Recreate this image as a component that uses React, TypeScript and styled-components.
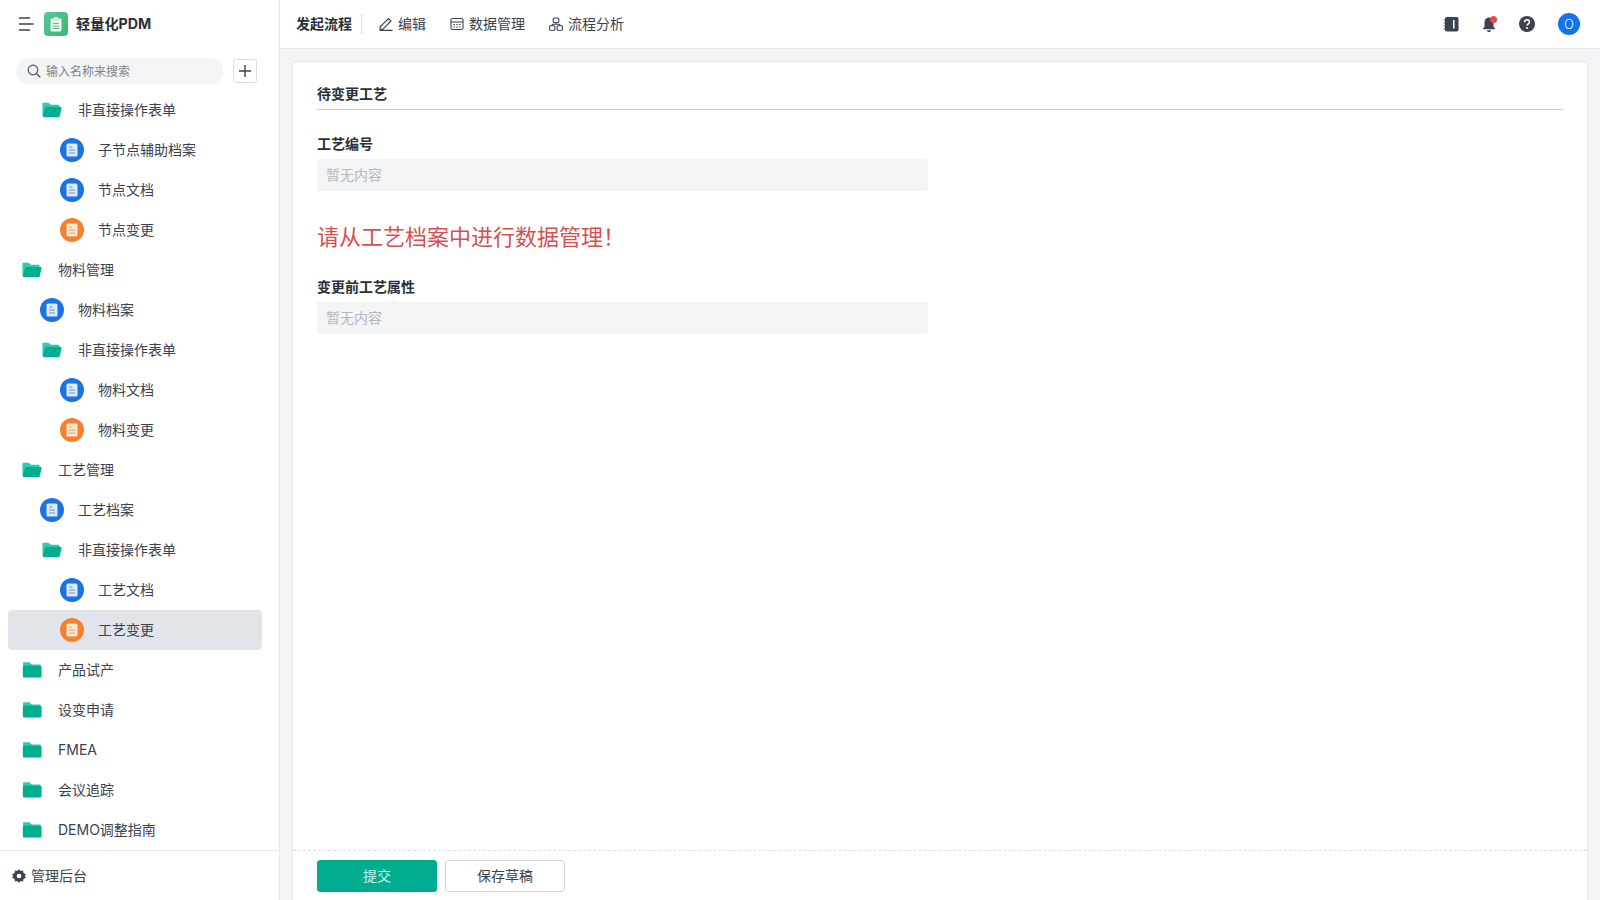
import React from "react";
import styled, { createGlobalStyle } from "styled-components";

const Global = createGlobalStyle`
  html, body { margin: 0; padding: 0; height: 100%; }
  body { font-family: Inter, "Noto Sans CJK SC", sans-serif; color: #1f2937; background: #f3f4f6; }
  * { box-sizing: border-box; }
`;

const Page = styled.div`
  display: flex;
  width: 1600px;
  height: 900px;
  overflow: hidden;
`;
const Sidebar = styled.aside`
  width: 280px;
  flex: none;
  display: flex;
  flex-direction: column;
  background: #fff;
  border-right: 1px solid #e5e7eb;
`;
const Brand = styled.div`
  height: 48px;
  flex: none;
  display: flex;
  align-items: center;
  padding-left: 18px;
`;
const Toggle = styled.span`
  display: flex;
  width: 16px;
  margin-right: 10px;
`;
const LogoTile = styled.span`
  width: 24px;
  height: 24px;
  border-radius: 4px;
  background: linear-gradient(135deg, #52c99a, #3fb56f);
  display: flex;
  align-items: center;
  justify-content: center;
  margin-right: 8px;
`;
const BrandName = styled.span`
  font-size: 14.2px;
  font-weight: 700;
  color: #2b2f36;
  padding-bottom: 2px;
`;
const SearchRow = styled.div`
  height: 42px;
  flex: none;
  display: flex;
  align-items: flex-start;
  padding: 10px 0 0 16px;
  gap: 10px;
`;
const SearchBox = styled.div`
  width: 207px;
  height: 26px;
  border-radius: 13px;
  background: #f3f4f6;
  display: flex;
  align-items: center;
  gap: 5px;
  padding-left: 11px;
  font-size: 12px;
  color: #7d838c;
`;
const SearchText = styled.span`
  padding-bottom: 2px;
`;
const AddButton = styled.span`
  width: 24px;
  height: 24px;
  border: 1px solid #d9dce1;
  border-radius: 3px;
  display: flex;
  align-items: center;
  justify-content: center;
  margin-top: 1px;
`;
const Tree = styled.div`
  flex: 1;
  min-height: 0;
  overflow: hidden;
  padding-right: 17px;
  padding-left: 8px;
`;
const Row = styled.div<{ $level: number; $active?: boolean }>`
  height: 40px;
  display: flex;
  align-items: center;
  gap: 16px;
  padding-left: ${(p) => 14 + p.$level * 20}px;
  border-radius: 4px;
  background: ${(p) => (p.$active ? "#e1e4e8" : "transparent")};
  font-size: 14px;
  color: #3b4250;
`;
const RowLabel = styled.span`
  padding-bottom: 2px;
`;
const IconBox = styled.span`
  width: 20px;
  flex: none;
  display: flex;
  justify-content: center;
`;
const DocCircle = styled.span<{ $color: string }>`
  width: 24px;
  height: 24px;
  flex: none;
  border-radius: 50%;
  background: ${(p) => p.$color};
  display: flex;
  align-items: center;
  justify-content: center;
`;
const SideFooter = styled.div`
  height: 50px;
  flex: none;
  border-top: 1px solid #e5e7eb;
  display: flex;
  align-items: center;
  gap: 5px;
  padding-left: 12px;
  font-size: 14px;
  color: #3b4250;
`;
const Main = styled.main`
  flex: 1;
  min-width: 0;
  display: flex;
  flex-direction: column;
`;
const TopBar = styled.header`
  height: 49px;
  flex: none;
  background: #fff;
  border-bottom: 1px solid #e5e7eb;
  display: flex;
  align-items: center;
  padding-left: 16px;
  padding-right: 20px;
  font-size: 14px;
`;
const FlowTitle = styled.span`
  font-weight: 600;
  color: #2b2f36;
  padding-right: 9px;
  border-right: 1px solid #d9dce1;
  line-height: 20px;
  margin-right: 17px;
`;
const TopAction = styled.span`
  display: flex;
  align-items: center;
  gap: 5px;
  margin-right: 24px;
  color: #3b4250;
`;
const ActionText = styled.span`
  padding-bottom: 2px;
`;
const TopRight = styled.div`
  margin-left: auto;
  display: flex;
  align-items: center;
  gap: 20px;
`;
const TopIcon = styled.span`
  position: relative;
  width: 18px;
  height: 18px;
  display: flex;
  align-items: center;
  justify-content: center;
`;
const RedDot = styled.span`
  position: absolute;
  top: 1px;
  right: 1px;
  width: 7px;
  height: 7px;
  border-radius: 50%;
  background: #e5484d;
`;
const Avatar = styled.span`
  width: 22px;
  height: 22px;
  border-radius: 50%;
  background: #1473e6;
  color: #e8f1fd;
  font-size: 13px;
  font-weight: 300;
  display: flex;
  align-items: center;
  justify-content: center;
  margin-left: 2px;
`;
const Content = styled.div`
  flex: 1;
  min-height: 0;
  padding: 12px 12px 0 12px;
  display: flex;
`;
const Card = styled.section`
  flex: 1;
  display: flex;
  flex-direction: column;
  background: #fff;
  border: 1px solid #e5e7eb;
  border-bottom: none;
  border-radius: 4px 4px 0 0;
`;
const Body = styled.div`
  flex: 1;
  padding: 22px 24px 0 24px;
`;
const SectionTitle = styled.h3`
  margin: 0 0 24px;
  height: 26px;
  font-size: 14px;
  line-height: 20px;
  font-weight: 600;
  color: #2b2f36;
  border-bottom: 1px solid #c9ccd1;
`;
const FieldLabel = styled.div`
  font-size: 14px;
  line-height: 20px;
  font-weight: 600;
  color: #2b2f36;
  margin-bottom: 5px;
`;
const ReadOnly = styled.div`
  width: 611px;
  height: 32px;
  border-radius: 2px;
  background: #f3f4f6;
  padding: 0 0 2px 9px;
  display: flex;
  align-items: center;
  font-size: 14px;
  color: #b4b8bf;
`;
const Warning = styled.div`
  font-size: 22px;
  line-height: 32px;
  color: #d5504f;
  margin: 30px 0 24px;
`;
const Footer = styled.div`
  height: 50px;
  flex: none;
  border-top: 1px dashed #dcdfe3;
  display: flex;
  align-items: center;
  gap: 8px;
  padding-left: 24px;
`;
const Btn = styled.button<{ $primary?: boolean }>`
  width: 120px;
  height: 32px;
  border-radius: 3px;
  border: 1px solid ${(p) => (p.$primary ? "#00ae8f" : "#d3d6db")};
  background: ${(p) => (p.$primary ? "#00ae8f" : "#fff")};
  color: ${(p) => (p.$primary ? "#c9f3e8" : "#3b4250")};
  font: inherit;
  font-size: 14px;
  padding: 0 0 2px;
`;

const FolderClosed = () => (
  <svg width="20" height="16" viewBox="0 0 20 16">
    <path d="M1 1.500C1 .8 1.600.3 2.300.3h4.800c.5 0 .9.200 1.200.600L9.600 2.500H17.500c.9 0 1.500.6 1.500 1.500v.5H1z" fill="#27cdb0" />
    <rect x="0.800" y="3.800" width="18.800" height="11.700" rx="1.500" fill="#00ae8f" />
  </svg>
);
const FolderOpen = () => (
  <svg width="21" height="16" viewBox="0 0 21 16">
    <path d="M.5 1.500C.5.8 1.100.3 1.800.3h4.800c.5 0 .9.200 1.200.6L9.100 2.500H17c.9 0 1.500.6 1.500 1.500v1.500H3.500L2 14H.5z" fill="#27cdb0" />
    <path d="M3.200 5.800C3.300 5.200 3.800 4.800 4.400 4.800H19.500c.7 0 1.200.6 1 1.300l-1.800 8.300c-.1.700-.7 1.100-1.300 1.100H2.200c-.9 0-1.500-.7-1.300-1.500z" fill="#00ae8f" />
  </svg>
);
const DocGlyph = ({ line, paper }: { line: string; paper: string }) => (
  <svg width="14" height="16" viewBox="0 0 14 16">
    <rect x="1.500" y="1.500" width="11" height="13" rx="1.500" fill={paper} />
    <path d="M4 5h3.500M4 8h6M4 11h6" stroke={line} strokeWidth="1.200" fill="none" />
  </svg>
);
const Doc = ({ kind }: { kind: "blue" | "orange" }) => (
  <DocCircle $color={kind === "blue" ? "#1a73e3" : "#f5802e"}>
    <DocGlyph
      line={kind === "blue" ? "#5a9aeb" : "#f79a5c"}
      paper={kind === "blue" ? "#dfeafa" : "#fde8d8"}
    />
  </DocCircle>
);

type Kind = "open" | "closed" | "blue" | "orange";
const rows: { t: string; l: number; k: Kind; a?: boolean }[] = [
  { t: "非直接操作表单", l: 1, k: "open" },
  { t: "子节点辅助档案", l: 2, k: "blue" },
  { t: "节点文档", l: 2, k: "blue" },
  { t: "节点变更", l: 2, k: "orange" },
  { t: "物料管理", l: 0, k: "open" },
  { t: "物料档案", l: 1, k: "blue" },
  { t: "非直接操作表单", l: 1, k: "open" },
  { t: "物料文档", l: 2, k: "blue" },
  { t: "物料变更", l: 2, k: "orange" },
  { t: "工艺管理", l: 0, k: "open" },
  { t: "工艺档案", l: 1, k: "blue" },
  { t: "非直接操作表单", l: 1, k: "open" },
  { t: "工艺文档", l: 2, k: "blue" },
  { t: "工艺变更", l: 2, k: "orange", a: true },
  { t: "产品试产", l: 0, k: "closed" },
  { t: "设变申请", l: 0, k: "closed" },
  { t: "FMEA", l: 0, k: "closed" },
  { t: "会议追踪", l: 0, k: "closed" },
  { t: "DEMO调整指南", l: 0, k: "closed" },
];

const stroke = { fill: "none", stroke: "#3b4250", strokeWidth: 1.1 };

export default function App() {
  return (
    <Page>
      <Global />
      <Sidebar>
        <Brand>
          <Toggle>
            <svg width="16" height="14" viewBox="0 0 16 14">
              <path d="M1.500 1h10M1.500 7h13.500M1.500 13h10" stroke="#3b4250" strokeWidth="1.600" strokeLinecap="round" fill="none" />
            </svg>
          </Toggle>
          <LogoTile>
            <svg width="12" height="15" viewBox="0 0 12 15">
              <rect x="0.500" y="1.500" width="11" height="13" rx="1.500" fill="#eafaf1" />
              <rect x="3.500" y="0" width="5" height="3" rx="1" fill="#eafaf1" stroke="#4fc287" strokeWidth="0.500" />
              <path d="M3 6.500h6M3 9h6M3 11.500h6" stroke="#4fc287" strokeWidth="1" />
            </svg>
          </LogoTile>
          <BrandName>轻量化PDM</BrandName>
        </Brand>
        <SearchRow>
          <SearchBox>
            <svg width="14" height="14" viewBox="0 0 14 14">
              <circle cx="6" cy="6" r="4.800" fill="none" stroke="#4b5563" strokeWidth="1.200" />
              <path d="M9.500 9.500L13 13" stroke="#4b5563" strokeWidth="1.200" strokeLinecap="round" />
            </svg>
            <SearchText>输入名称来搜索</SearchText>
          </SearchBox>
          <AddButton>
            <svg width="14" height="14" viewBox="0 0 14 14">
              <path d="M7 1v12M1 7h12" stroke="#3b4250" strokeWidth="1.400" fill="none" />
            </svg>
          </AddButton>
        </SearchRow>
        <Tree>
          {rows.map((r, i) => (
            <Row key={i} $level={r.l} $active={r.a}>
              <IconBox>
                {r.k === "open" && <FolderOpen />}
                {r.k === "closed" && <FolderClosed />}
                {r.k === "blue" && <Doc kind="blue" />}
                {r.k === "orange" && <Doc kind="orange" />}
              </IconBox>
              <RowLabel>{r.t}</RowLabel>
            </Row>
          ))}
        </Tree>
        <SideFooter>
          <svg width="14" height="14" viewBox="0 0 24 24">
            <path
              fillRule="evenodd"
              fill="#3b4250"
              d="M12 0l2.600 3.400 4.300-.8.800 4.300L24 9.500 21.600 12 24 14.500l-4.300 2.600-.8 4.300-4.300-.8L12 24l-2.600-3.400-4.300.8-.8-4.300L0 14.500 2.400 12 0 9.500l4.300-2.600.8-4.300 4.300.8zM12 8a4 4 0 100 8 4 4 0 000-8z"
            />
          </svg>
          <RowLabel>管理后台</RowLabel>
        </SideFooter>
      </Sidebar>
      <Main>
        <TopBar>
          <FlowTitle>发起流程</FlowTitle>
          <TopAction>
            <svg width="14" height="14" viewBox="0 0 14 14">
              <path d="M1 10L9.500 1.500l2.500 2.500-8 8.200H1zM.5 13.400h13" {...stroke} />
            </svg>
            <ActionText>编辑</ActionText>
          </TopAction>
          <TopAction>
            <svg width="14" height="14" viewBox="0 0 14 14">
              <rect x="1" y="1.500" width="12" height="11" rx="1.500" {...stroke} />
              <path d="M1 5h12M3.500 7.500h1.500M6.300 7.500h1.500M9 7.500h1.500M3.500 10h1.500M6.300 10h1.500M9 10h1.500" {...stroke} />
            </svg>
            <ActionText>数据管理</ActionText>
          </TopAction>
          <TopAction>
            <svg width="14" height="14" viewBox="0 0 14 14">
              <rect x="4.200" y="1" width="5.600" height="4.500" rx="1" {...stroke} />
              <rect x="0.500" y="8.800" width="5.400" height="4.500" rx="1" {...stroke} />
              <rect x="8.100" y="8.800" width="5.400" height="4.500" rx="1" {...stroke} />
              <path d="M3.200 8.800V7.200h7.600v1.600M7 5.500v1.700" {...stroke} />
            </svg>
            <ActionText>流程分析</ActionText>
          </TopAction>
          <TopRight>
            <TopIcon>
              <svg width="16" height="16" viewBox="0 0 16 16">
                <rect x="2" y="1" width="13.500" height="14.500" rx="1.800" fill="#3b4250" />
                <path d="M.8 4h2M.8 7h2M.8 10h2M.8 13h2" stroke="#3b4250" strokeWidth="1" />
                <rect x="10" y="4" width="1.500" height="8.500" fill="#fff" />
              </svg>
            </TopIcon>
            <TopIcon>
              <svg width="14" height="16" viewBox="0 0 14 16">
                <path d="M7 1.500c3 0 4.500 2.200 4.500 5v4l1.800 2.800H.7l1.800-2.800v-4c0-2.800 1.500-5 4.500-5zM5 14.200h4c0 1-.8 1.800-2 1.800s-2-.8-2-1.800z" fill="#3b4250" />
              </svg>
              <RedDot />
            </TopIcon>
            <TopIcon>
              <svg width="16" height="16" viewBox="0 0 16 16">
                <circle cx="8" cy="8" r="8" fill="#3b4250" />
                <path d="M5.500 6.200c0-1.500 1.100-2.400 2.500-2.400s2.500.9 2.500 2.200c0 1.800-2.500 1.800-2.500 3.600" fill="none" stroke="#fff" strokeWidth="1.500" />
                <circle cx="8" cy="12" r="1" fill="#fff" />
              </svg>
            </TopIcon>
            <Avatar>O</Avatar>
          </TopRight>
        </TopBar>
        <Content>
          <Card>
            <Body>
              <SectionTitle>待变更工艺</SectionTitle>
              <FieldLabel>工艺编号</FieldLabel>
              <ReadOnly>暂无内容</ReadOnly>
              <Warning>请从工艺档案中进行数据管理！</Warning>
              <FieldLabel>变更前工艺属性</FieldLabel>
              <ReadOnly>暂无内容</ReadOnly>
            </Body>
            <Footer>
              <Btn $primary>提交</Btn>
              <Btn>保存草稿</Btn>
            </Footer>
          </Card>
        </Content>
      </Main>
    </Page>
  );
}
